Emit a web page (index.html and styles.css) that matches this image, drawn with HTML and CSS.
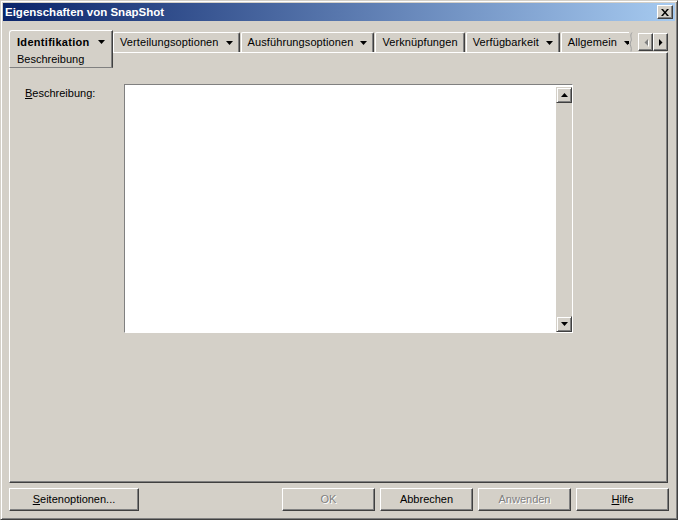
FILE: index.html
```html
<!DOCTYPE html>
<html lang="de">
<head>
<meta charset="utf-8">
<title>Eigenschaften von SnapShot</title>
<link rel="stylesheet" href="styles.css">
</head>
<body>
<div class="window">
  <div class="titlebar">
    <span class="title">Eigenschaften von SnapShot</span>
    <div class="close" aria-label="Schließen">
      <svg width="8" height="7" viewBox="0 0 8 7"><path d="M0 0h2l2 2.4 2-2.4h2l-3 3.5 3 3.5h-2l-2-2.4-2 2.4h-2l3-3.5z" fill="#000"/></svg>
    </div>
  </div>

  <div class="tabstrip">
    <div class="tab-active">
      <div class="tab-row"><span class="tab-bold">Identifikation</span><svg class="drop" width="7" height="4" viewBox="0 0 7 4"><path d="M0 0h7l-3.5 4z" fill="#000"/></svg></div>
      <div class="subtab">Beschreibung</div>
    </div>
    <div class="tablist">
      <div class="tab">Verteilungsoptionen<svg class="drop" width="7" height="4" viewBox="0 0 7 4"><path d="M0 0h7l-3.5 4z" fill="#000"/></svg></div>
      <div class="tab">Ausführungsoptionen<svg class="drop" width="7" height="4" viewBox="0 0 7 4"><path d="M0 0h7l-3.5 4z" fill="#000"/></svg></div>
      <div class="tab">Verknüpfungen</div>
      <div class="tab">Verfügbarkeit<svg class="drop" width="7" height="4" viewBox="0 0 7 4"><path d="M0 0h7l-3.5 4z" fill="#000"/></svg></div>
      <div class="tab">Allgemein<svg class="drop" width="7" height="4" viewBox="0 0 7 4"><path d="M0 0h7l-3.5 4z" fill="#000"/></svg></div>
    </div>
    <svg class="tear" width="4" height="20" viewBox="0 0 4 20"><path d="M3 0.5 C0 4 4 7 1.5 10 C0 13 3.5 15 2 19.5" fill="none" stroke="#a0a0a0" stroke-width="1"/></svg>
    <div class="scroller">
      <div class="sbtn"><svg width="4" height="7" viewBox="0 0 4 7"><path d="M4 0v7L0.5 3.5z" fill="#808080"/></svg></div>
      <div class="sbtn"><svg width="4" height="7" viewBox="0 0 4 7"><path d="M0 0v7l3.5-3.5z" fill="#000"/></svg></div>
    </div>
  </div>

  <div class="panel">
    <div class="field">
      <label class="field-label"><u>B</u>eschreibung:</label>
      <div class="edit">
        <div class="edit-text"></div>
        <div class="vscroll">
          <div class="arrow-btn"><svg width="7" height="4" viewBox="0 0 7 4"><path d="M0 4h7L3.5 0z" fill="#000"/></svg></div>
          <div class="track"></div>
          <div class="arrow-btn"><svg width="7" height="4" viewBox="0 0 7 4"><path d="M0 0h7l-3.5 4z" fill="#000"/></svg></div>
        </div>
      </div>
    </div>
  </div>

  <div class="buttons">
    <button class="btn btn-wide"><span><u>S</u>eitenoptionen...</span></button>
    <button class="btn" disabled>OK</button>
    <button class="btn">Abbrechen</button>
    <button class="btn" disabled>Anwenden</button>
    <button class="btn"><span><u>H</u>ilfe</span></button>
  </div>
</div>
</body>
</html>
```

FILE: styles.css
```css
* { box-sizing: border-box; }

html, body {
  margin: 0;
  padding: 0;
  background: #d4d0c8;
}

body {
  font-family: "Liberation Sans", Arial, sans-serif;
  font-size: 11px;
  color: #000;
}

.window {
  width: 678px;
  height: 520px;
  display: flex;
  flex-direction: column;
  background: #d4d0c8;
  border: 1px solid;
  border-color: #d4d0c8 #404040 #404040 #d4d0c8;
  box-shadow: inset 1px 1px #fff, inset -1px -1px #808080;
  padding: 2px;
}

/* Title bar */
.titlebar {
  flex: none;
  height: 18px;
  display: flex;
  align-items: center;
  justify-content: space-between;
  padding: 0 2px 0 2px;
  background: linear-gradient(to right, #0a246a, #a6caf0);
}

.title {
  color: #fff;
  font-weight: bold;
  font-size: 11.5px;
  line-height: 18px;
  white-space: nowrap;
}

.close {
  width: 16px;
  height: 14px;
  display: flex;
  align-items: center;
  justify-content: center;
  background: #d4d0c8;
  border: 1px solid;
  border-color: #fff #404040 #404040 #fff;
  box-shadow: inset -1px -1px #808080;
}

/* Tabs */
.tabstrip {
  flex: none;
  height: 22px;
  margin: 9px 7px 0 6px;
  display: flex;
  align-items: flex-end;
}

.tab-active {
  flex: none;
  width: 104px;
  height: 38px;
  margin-bottom: -16px;
  z-index: 2;
  background: #d4d0c8;
  border-left: 1px solid #fff;
  border-top: 1px solid #fff;
  border-right: 1px solid #404040;
  border-bottom: 1px solid #808080;
  border-top-left-radius: 3px;
  box-shadow: inset -1px 0 #808080;
  padding: 3px 0 0 7px;
  line-height: 16px;
}

.tab-row {
  display: flex;
  align-items: center;
}

.tab-bold {
  font-weight: bold;
  letter-spacing: 0.3px;
}

.tab-row .drop {
  margin-left: 8px;
}

.subtab {
  white-space: nowrap;
  margin-top: 1px;
}

.tablist {
  flex: none;
  width: 516px;
  height: 20px;
  display: flex;
  overflow: hidden;
}

.tab {
  flex: none;
  height: 20px;
  display: flex;
  align-items: center;
  padding: 0 6px;
  margin-right: 1px;
  line-height: 13px;
  letter-spacing: 0.1px;
  white-space: nowrap;
  border-top: 1px solid #fff;
  border-left: 1px solid #fff;
  border-right: 1px solid #404040;
  border-radius: 2px 2px 0 0;
  box-shadow: inset -1px 0 #808080;
}

.tab .drop {
  margin-left: 7px;
}

.tear {
  flex: none;
  align-self: flex-end;
}

.scroller {
  flex: none;
  margin-left: auto;
  margin-bottom: 1px;
  display: flex;
  height: 18px;
}

.sbtn {
  width: 15px;
  height: 18px;
  display: flex;
  align-items: center;
  justify-content: center;
  background: #d4d0c8;
  border: 1px solid;
  border-color: #fff #404040 #404040 #fff;
  box-shadow: inset -1px -1px #808080;
}

.sbtn:first-child svg {
  filter: drop-shadow(1px 1px 0 #fff);
}

/* Panel */
.panel {
  flex: 1;
  margin: 0 7px 0 6px;
  border: 1px solid;
  border-color: #fff #404040 #404040 #fff;
  box-shadow: inset -1px -1px #808080;
  padding: 31px 0 0 15px;
}

.field {
  display: flex;
  align-items: flex-start;
}

.field-label {
  flex: none;
  width: 99px;
  margin-top: 3px;
  line-height: 13px;
}

.edit {
  flex: none;
  width: 449px;
  height: 249px;
  display: flex;
  background: #fff;
  border: 1px solid;
  border-color: #808080 #fff #fff #808080;
}

.edit-text {
  flex: 1;
}

.vscroll {
  flex: none;
  width: 16px;
  margin-top: 2px;
  display: flex;
  flex-direction: column;
}

.arrow-btn {
  flex: none;
  height: 16px;
  display: flex;
  align-items: center;
  justify-content: center;
  background: #d4d0c8;
  border: 1px solid;
  border-color: #d4d0c8 #404040 #404040 #d4d0c8;
  box-shadow: inset 1px 1px #fff, inset -1px -1px #808080;
}

.track {
  flex: 1;
  background: #d4d0c8;
}

/* Buttons */
.buttons {
  flex: none;
  height: 23px;
  margin: 5px 6px 6px 6px;
  display: flex;
  gap: 5px;
}

.btn {
  width: 93px;
  height: 23px;
  padding: 0;
  display: flex;
  align-items: center;
  justify-content: center;
  font: inherit;
  line-height: 13px;
  color: #000;
  background: #d4d0c8;
  border: 1px solid;
  border-color: #fff #404040 #404040 #fff;
  box-shadow: inset -1px -1px #808080;
}

.btn-wide {
  width: 130px;
  margin-right: auto;
}

.btn:disabled {
  color: #808080;
  text-shadow: 1px 1px 0 #fff;
}
```
